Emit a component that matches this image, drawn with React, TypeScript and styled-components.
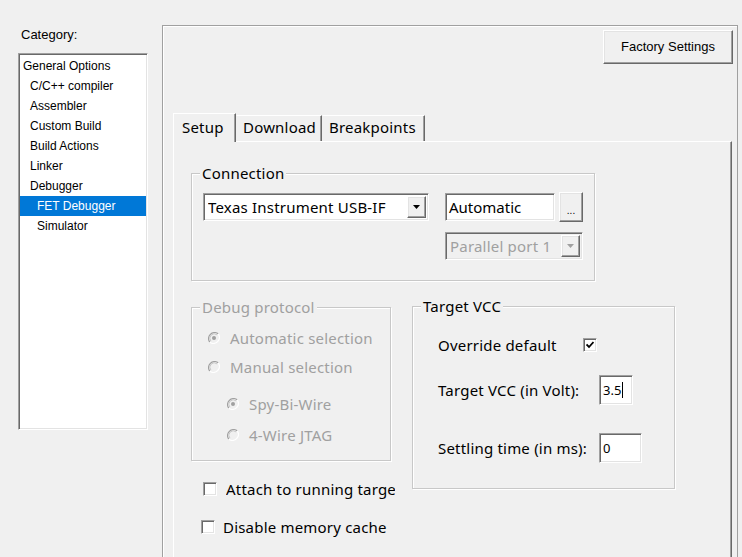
import React from "react";
import styled, { createGlobalStyle, css } from "styled-components";

const GlobalStyle = createGlobalStyle`
  html, body { margin: 0; padding: 0; background: #f0f0f0; }
  body { overflow: hidden; }
  * { box-sizing: border-box; }
`;

const uiFont = `"Noto Sans", "Open Sans", sans-serif`;
const sysFont = `"Liberation Sans", Arial, sans-serif`;

const sunken = css`
  border-style: solid;
  border-width: 1px;
  border-color: #a0a0a0 #ffffff #ffffff #a0a0a0;
  box-shadow: inset 1px 1px 0 #696969, inset -1px -1px 0 #e3e3e3;
`;

const raised = css`
  border-style: solid;
  border-width: 1px;
  border-color: #ffffff #696969 #696969 #ffffff;
  box-shadow: inset -1px -1px 0 #a0a0a0, inset 1px 1px 0 #e3e3e3;
`;

const Dialog = styled.div`
  display: flex;
  width: 742px;
  height: 557px;
  overflow: hidden;
  background: #f0f0f0;
  color: #000;
  font-family: ${uiFont};
  letter-spacing: 0.2px;
`;

const Sidebar = styled.div`
  flex: none;
  width: 162px;
  padding: 27px 0 0 18px;
  display: flex;
  flex-direction: column;
  letter-spacing: 0;
`;

const CategoryLabel = styled.div`
  font: 13px/16px ${sysFont};
  padding-left: 3px;
  margin-bottom: 10px;
`;

const CategoryList = styled.ul`
  list-style: none;
  margin: 0;
  padding: 2px 1px 0 1px;
  width: 130px;
  height: 377px;
  background: #fff;
  ${sunken}
`;

const CategoryItem = styled.li<{ $level: number; $selected?: boolean }>`
  height: 20px;
  font: 12px/20px ${sysFont};
  padding-left: ${(p) => 3 + p.$level * 7}px;
  white-space: nowrap;
  background: ${(p) => (p.$selected ? "#0078d7" : "transparent")};
  color: ${(p) => (p.$selected ? "#fff" : "#000")};
`;

const OptionsPanel = styled.section`
  flex: none;
  width: 576px;
  height: 545px;
  margin-top: 25px;
  border: 1px solid #a0a0a0;
  box-shadow: inset 1px 1px 0 #fff;
  padding: 4px 4px 0 10px;
  display: flex;
  flex-direction: column;
`;

const TopBar = styled.div`
  display: flex;
  justify-content: flex-end;
`;

const PushButton = styled.button<{ $w: number; $h: number }>`
  width: ${(p) => p.$w}px;
  height: ${(p) => p.$h}px;
  background: #f0f0f0;
  ${raised}
  padding: 0;
  font: 13px/16px ${sysFont};
  letter-spacing: 0;
  color: #000;
`;

const TabStrip = styled.div`
  display: flex;
  align-items: flex-end;
  height: 28px;
  margin-top: 49px;
`;

const Tab = styled.div<{ $w: number; $active?: boolean }>`
  width: ${(p) => p.$w}px;
  height: ${(p) => (p.$active ? 29 : 26)}px;
  margin-bottom: ${(p) => (p.$active ? -1 : 0)}px;
  position: relative;
  z-index: ${(p) => (p.$active ? 1 : 0)};
  background: #f0f0f0;
  border-top: 1px solid #ffffff;
  border-left: 1px solid ${(p) => (p.$active ? "#ffffff" : "transparent")};
  border-right: 1px solid #696969;
  box-shadow: inset -1px 0 0 #a0a0a0;
  padding-left: ${(p) => (p.$active ? 8 : 6)}px;
  padding-top: ${(p) => (p.$active ? 3 : 1)}px;
  font-size: 15px;
  line-height: 20px;
  white-space: nowrap;
  overflow: hidden;
`;

const TabPage = styled.div`
  flex: 1;
  margin-right: 1px;
  border-top: 1px solid #ffffff;
  border-left: 1px solid #ffffff;
  border-right: 1px solid #696969;
  box-shadow: inset -1px 0 0 #a0a0a0;
  padding: 0 0 0 17px;
`;

const GroupBox = styled.div<{ $w: number; $h: number; $top: number }>`
  width: ${(p) => p.$w}px;
  height: ${(p) => p.$h}px;
  margin-top: ${(p) => p.$top}px;
  border: 1px solid #c8c8c8;
  box-shadow: inset 1px 1px 0 #fff, 1px 1px 0 #fff;
  display: flex;
  flex-direction: column;
`;

const GroupCaption = styled.div<{ $disabled?: boolean }>`
  width: fit-content;
  margin: -10px 0 0 8px;
  padding: 0 2px;
  height: 18px;
  line-height: 18px;
  font-size: 15px;
  background: #f0f0f0;
  color: ${(p) => (p.$disabled ? "#a0a0a0" : "#000")};
`;

const FieldRow = styled.div<{ $top: number; $left: number }>`
  display: flex;
  align-items: center;
  margin-top: ${(p) => p.$top}px;
  padding-left: ${(p) => p.$left}px;
`;

const Combo = styled.div<{ $w: number; $disabled?: boolean }>`
  width: ${(p) => p.$w}px;
  height: 28px;
  display: flex;
  align-items: center;
  background: ${(p) => (p.$disabled ? "#f0f0f0" : "#fff")};
  ${sunken}
  padding: 0 2px 0 4px;
  font-size: 15px;
  color: ${(p) => (p.$disabled ? "#a0a0a0" : "#000")};
`;

const ComboText = styled.span`
  flex: 1;
  white-space: nowrap;
  overflow: hidden;
`;

const DropButton = styled.span`
  width: 19px;
  height: 22px;
  flex: none;
  display: flex;
  align-items: center;
  justify-content: center;
  background: #f0f0f0;
  ${raised}
`;

const EditBox = styled.div<{ $w: number; $h: number; $left?: number; $size?: number }>`
  width: ${(p) => p.$w}px;
  height: ${(p) => p.$h}px;
  margin-left: ${(p) => p.$left ?? 0}px;
  flex: none;
  background: #fff;
  ${sunken}
  display: flex;
  align-items: center;
  padding-left: 3px;
  font-size: ${(p) => p.$size ?? 15}px;
  letter-spacing: 0;
  white-space: nowrap;
  overflow: hidden;
`;

const Caret = styled.span`
  display: inline-block;
  width: 1px;
  height: 16px;
  background: #000;
  margin-left: 1px;
`;

const BrowseButton = styled.button`
  width: 24px;
  height: 30px;
  margin-left: 4px;
  padding: 0 0 5px;
  background: #f0f0f0;
  ${raised}
  display: flex;
  align-items: flex-end;
  justify-content: center;
  font: 10px/10px ${sysFont};
  color: #000;
`;

const LowerArea = styled.div`
  display: flex;
  align-items: flex-start;
`;

const Column = styled.div<{ $left?: number; $w: number }>`
  display: flex;
  flex-direction: column;
  flex: none;
  width: ${(p) => p.$w}px;
  margin-left: ${(p) => p.$left ?? 0}px;
`;

const OptionRow = styled.div<{ $top: number; $left: number; $gap: number; $disabled?: boolean }>`
  display: flex;
  align-items: center;
  height: 22px;
  margin-top: ${(p) => p.$top}px;
  padding-left: ${(p) => p.$left}px;
  gap: ${(p) => p.$gap}px;
  font-size: 15px;
  color: ${(p) => (p.$disabled ? "#a0a0a0" : "#000")};
  white-space: nowrap;
`;

const ClippedLabel = styled.span<{ $w: number }>`
  width: ${(p) => p.$w}px;
  flex: none;
  overflow: hidden;
  white-space: nowrap;
`;

const CheckBoxBox = styled.span`
  width: 14px;
  height: 14px;
  flex: none;
  background: #fff;
  ${sunken}
  display: flex;
  align-items: center;
  justify-content: center;
`;

const FormLabel = styled.span<{ $w: number }>`
  width: ${(p) => p.$w}px;
  flex: none;
  font-size: 15px;
  white-space: nowrap;
`;

const FormRow = styled.div<{ $top: number; $h: number }>`
  display: flex;
  align-items: center;
  height: ${(p) => p.$h}px;
  margin-top: ${(p) => p.$top}px;
  padding-left: 25px;
`;

function Arrow({ color }: { color: string }) {
  return (
    <svg width="7" height="4" viewBox="0 0 7 4">
      <path d="M0 0 H7 L3.5 4 Z" fill={color} />
    </svg>
  );
}

function Radio({ checked }: { checked?: boolean }) {
  return (
    <svg width="12" height="12" viewBox="0 0 12 12" style={{ flex: "none" }}>
      <circle cx="6" cy="6" r="5.5" fill="#f0f0f0" />
      <path d="M1.8 10.2 A6 6 0 0 1 10.2 1.8" stroke="#a0a0a0" strokeWidth="1.3" fill="none" />
      <path d="M2.9 9.1 A4.4 4.4 0 0 1 9.1 2.9" stroke="#c8c8c8" strokeWidth="1" fill="none" />
      <path d="M10.2 1.8 A6 6 0 0 1 1.8 10.2" stroke="#ffffff" strokeWidth="1.3" fill="none" />
      {checked && <circle cx="6" cy="6" r="2" fill="#a0a0a0" />}
    </svg>
  );
}

function CheckBox({ checked }: { checked?: boolean }) {
  return (
    <CheckBoxBox>
      {checked && (
        <svg width="8" height="8" viewBox="0 0 8 8">
          <path d="M0.5 3.5 L3 6 L7.5 1" stroke="#000" strokeWidth="1.8" fill="none" />
        </svg>
      )}
    </CheckBoxBox>
  );
}

const categories: { label: string; level: number; selected?: boolean }[] = [
  { label: "General Options", level: 0 },
  { label: "C/C++ compiler", level: 1 },
  { label: "Assembler", level: 1 },
  { label: "Custom Build", level: 1 },
  { label: "Build Actions", level: 1 },
  { label: "Linker", level: 1 },
  { label: "Debugger", level: 1 },
  { label: "FET Debugger", level: 2, selected: true },
  { label: "Simulator", level: 2 },
];

export default function App() {
  return (
    <>
      <GlobalStyle />
      <Dialog>
        <Sidebar>
          <CategoryLabel>Category:</CategoryLabel>
          <CategoryList>
            {categories.map((c) => (
              <CategoryItem key={c.label} $level={c.level} $selected={c.selected}>
                {c.label}
              </CategoryItem>
            ))}
          </CategoryList>
        </Sidebar>

        <OptionsPanel>
          <TopBar>
            <PushButton $w={130} $h={34}>Factory Settings</PushButton>
          </TopBar>

          <TabStrip>
            <Tab $w={63} $active>Setup</Tab>
            <Tab $w={86}>Download</Tab>
            <Tab $w={103}>Breakpoints</Tab>
          </TabStrip>

          <TabPage>
            <GroupBox $w={404} $h={108} $top={31}>
              <GroupCaption>Connection</GroupCaption>
              <FieldRow $top={10} $left={11}>
                <Combo $w={226}>
                  <ComboText>Texas Instrument USB-IF</ComboText>
                  <DropButton>
                    <Arrow color="#000" />
                  </DropButton>
                </Combo>
                <EditBox $w={110} $h={28} $left={16}>Automatic</EditBox>
                <BrowseButton>...</BrowseButton>
              </FieldRow>
              <FieldRow $top={10} $left={253}>
                <Combo $w={138} $disabled>
                  <ComboText>Parallel port 1</ComboText>
                  <DropButton>
                    <Arrow color="#a0a0a0" />
                  </DropButton>
                </Combo>
              </FieldRow>
            </GroupBox>

            <LowerArea>
              <Column $w={200}>
                <GroupBox $w={200} $h={154} $top={26}>
                  <GroupCaption $disabled>Debug protocol</GroupCaption>
                  <OptionRow $top={11} $left={16} $gap={10} $disabled>
                    <Radio checked />
                    Automatic selection
                  </OptionRow>
                  <OptionRow $top={7} $left={16} $gap={10} $disabled>
                    <Radio />
                    Manual selection
                  </OptionRow>
                  <OptionRow $top={15} $left={35} $gap={10} $disabled>
                    <Radio checked />
                    Spy-Bi-Wire
                  </OptionRow>
                  <OptionRow $top={9} $left={35} $gap={10} $disabled>
                    <Radio />
                    4-Wire JTAG
                  </OptionRow>
                </GroupBox>
                <OptionRow $top={17} $left={12} $gap={9}>
                  <CheckBox />
                  <ClippedLabel $w={169}>Attach to running target</ClippedLabel>
                </OptionRow>
                <OptionRow $top={16} $left={10} $gap={8}>
                  <CheckBox />
                  Disable memory cache
                </OptionRow>
              </Column>

              <Column $w={263} $left={21}>
                <GroupBox $w={263} $h={183} $top={25}>
                  <GroupCaption>Target VCC</GroupCaption>
                  <FormRow $top={19} $h={22}>
                    <FormLabel $w={145}>Override default</FormLabel>
                    <CheckBox checked />
                  </FormRow>
                  <FormRow $top={19} $h={30}>
                    <FormLabel $w={161}>Target VCC (in Volt):</FormLabel>
                    <EditBox $w={34} $h={30} $size={13}>
                      3.5
                      <Caret />
                    </EditBox>
                  </FormRow>
                  <FormRow $top={28} $h={30}>
                    <FormLabel $w={161}>Settling time (in ms):</FormLabel>
                    <EditBox $w={43} $h={30} $size={13}>0</EditBox>
                  </FormRow>
                </GroupBox>
              </Column>
            </LowerArea>
          </TabPage>
        </OptionsPanel>
      </Dialog>
    </>
  );
}
